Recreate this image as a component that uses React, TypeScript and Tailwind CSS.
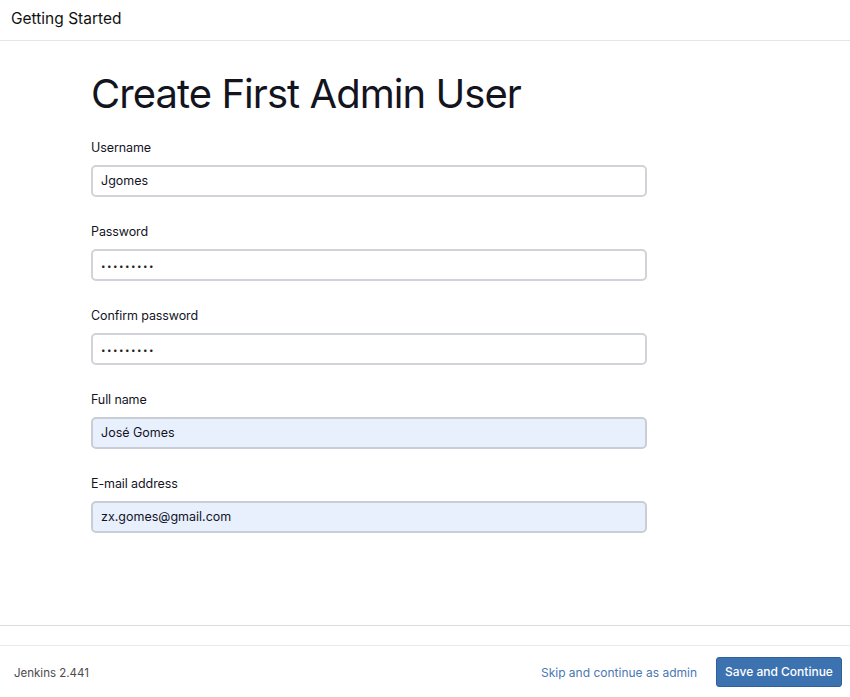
import React from "react";

const fields = [
  { label: "Username", value: "Jgomes", auto: false },
  { label: "Password", value: "•••••••••", auto: false, pw: true },
  { label: "Confirm password", value: "•••••••••", auto: false, pw: true },
  { label: "Full name", value: "José Gomes", auto: true },
  { label: "E-mail address", value: "zx.gomes@gmail.com", auto: true },
];

export default function App() {
  return (
    <div
      className="w-[850px] h-[697px] bg-white flex flex-col text-[#14141f] overflow-hidden"
      style={{ fontFamily: "Inter, 'Noto Sans', sans-serif" }}
    >
      <header className="h-[41px] shrink-0 border-b border-[#e6e6e6] flex items-center px-[11px] pb-[3px]">
        <span className="text-[15.5px] text-[#111]">Getting Started</span>
      </header>
      <main className="flex-1 pl-[91px] pt-[29px] border-b border-[#dcdcdc]">
        <h1 className="text-[40px] leading-[48px] font-normal tracking-[-0.95px] text-[#14141f]">
          Create First Admin User
        </h1>
        <div className="mt-[20px] flex flex-col gap-[25px] w-[556px]">
          {fields.map((f) => (
            <div key={f.label} className="flex flex-col gap-[7px]">
              <label className="text-[12.5px] leading-[20px] tracking-[-0.1px] text-[#14141f]">{f.label}</label>
              <div
                className={
                  f.auto
                    ? "h-[32px] rounded-[5px] border-2 border-[#c9ced4] bg-[#e8f0fe] flex items-center px-[8px] pt-[1px] text-[12.5px]"
                    : "h-[32px] rounded-[5px] border-2 border-[#d0d4d8] bg-white flex items-center px-[8px] pt-[1px] text-[12.5px]"
                }
              >
                {f.pw ? (
                  <span className="text-[8px] tracking-[1.5px] text-[#222]">{f.value}</span>
                ) : (
                  <span className="text-[#14141f]">{f.value}</span>
                )}
              </div>
            </div>
          ))}
        </div>
      </main>
      <div className="h-[20px] shrink-0 border-b border-[#ececec]" />
      <footer className="h-[51px] shrink-0 flex items-center justify-between pl-[14px] pr-[8px] pt-[1px]">
        <span className="text-[11.5px] text-[#4b4b4b] pt-[3px]">Jenkins 2.441</span>
        <div className="flex items-center gap-[19px]">
          <span className="text-[12px] text-[#4a77b4] pt-[1px]">Skip and continue as admin</span>
          <button className="h-[30px] w-[126px] rounded-[3px] bg-[#3d72b1] border border-[#2f5f98] text-white text-[12px] font-medium">
            Save and Continue
          </button>
        </div>
      </footer>
    </div>
  );
}
